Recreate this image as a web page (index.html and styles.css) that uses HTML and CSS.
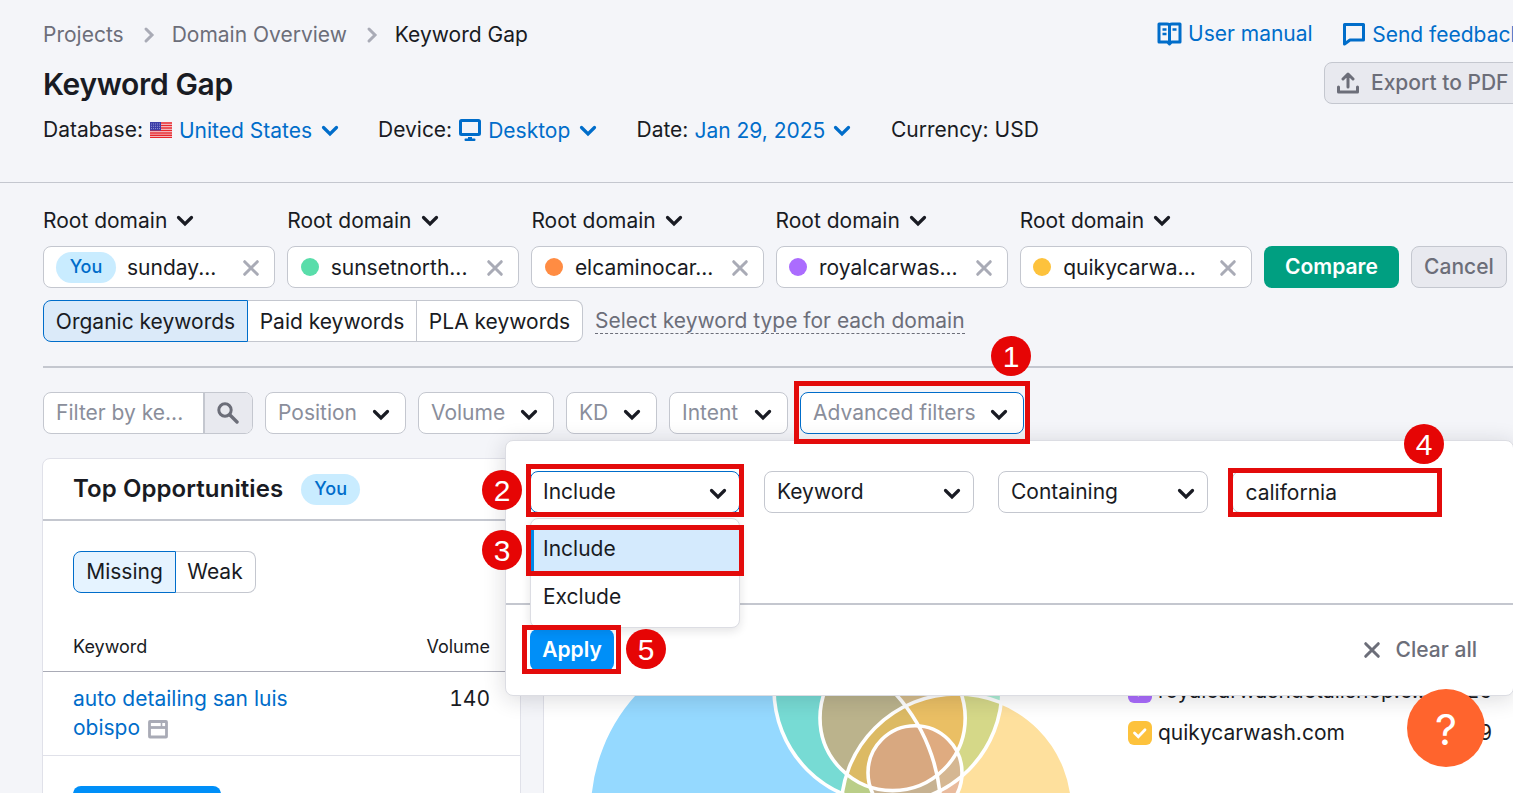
FILE: index.html
```html
<!DOCTYPE html>
<html lang="en">
<head>
<meta charset="utf-8">
<title>Keyword Gap</title>
<link rel="stylesheet" href="styles.css">
</head>
<body>
<svg class="defs" width="0" height="0" aria-hidden="true">
  <symbol id="chev" viewBox="0 0 18 12"><path d="M2.500 2.500 9 9l6.500-6.500" fill="none" stroke="currentColor" stroke-width="3.200" stroke-linecap="round" stroke-linejoin="miter"/></symbol>
  <symbol id="cross" viewBox="0 0 18 18"><path d="M2.700 2.700l12.600 12.600M15.300 2.700l-12.600 12.600" fill="none" stroke="currentColor" stroke-width="3" stroke-linecap="round"/></symbol>
  <symbol id="right" viewBox="0 0 12 18"><path d="M3 3l6 6-6 6" fill="none" stroke="currentColor" stroke-width="3" stroke-linecap="round" stroke-linejoin="miter"/></symbol>
  <symbol id="tick" viewBox="0 0 24 24"><path d="M6.500 12l3.800 3.800 6.700-7" fill="none" stroke="#fff" stroke-width="2.800" stroke-linecap="round" stroke-linejoin="miter"/></symbol>
</svg>
<div class="page">
  <header class="header">
    <div class="head-left">
      <nav class="crumbs">
        <span>Projects</span><svg class="ic-right"><use href="#right"/></svg><span>Domain Overview</span><svg class="ic-right"><use href="#right"/></svg><span class="current">Keyword Gap</span>
      </nav>
      <h1 class="title">Keyword Gap</h1>
      <div class="meta">
        <div class="meta-item m-db"><span>Database:</span>
          <svg class="flag" viewBox="0 0 22 16"><rect width="22" height="16" fill="#f4e4e8"/><path d="M0 1h22M0 3.500h22M0 6h22M0 8.500h22M0 11h22M0 13.300h22M0 15.500h22" stroke="#e8262c" stroke-width="1.400"/><rect width="11" height="8.500" fill="#3c3fa8"/><path d="M1 2h9M1 4.300h9M1 6.600h9" stroke="#a9abdd" stroke-width=".8" stroke-dasharray="1 1"/></svg>
          <span class="link">United States</span><svg class="ic-chev link"><use href="#chev"/></svg></div>
        <div class="meta-item m-dev"><span>Device:</span>
          <svg class="desktop" viewBox="0 0 22 24"><rect x="1.500" y="2.500" width="19" height="14" rx="1" fill="none" stroke="currentColor" stroke-width="3"/><path d="M9 19h4v1.500h2.500q1 0 1 1.200t-1 1.300h-9q-1 0-1-1.300t1-1.200H9z" fill="currentColor"/></svg>
          <span class="link">Desktop</span><svg class="ic-chev link"><use href="#chev"/></svg></div>
        <div class="meta-item m-date"><span>Date:</span><span class="link">Jan 29, 2025</span><svg class="ic-chev link"><use href="#chev"/></svg></div>
        <div class="meta-item m-cur"><span>Currency: USD</span></div>
      </div>
    </div>
    <div class="head-right">
      <div class="help-links">
        <a class="link manual"><svg viewBox="0 0 25 24" width="25" height="24"><path d="M2 2h8q2.500 0 2.500 1.500Q12.500 2 15 2h8v18h-8.500l-2 2-2-2H2zM12.500 3.500v17" fill="none" stroke="currentColor" stroke-width="3" stroke-linejoin="round"/><path d="M5.500 7.500h4M5.500 12h4M15.500 7.500h4" stroke="currentColor" stroke-width="2.500"/></svg><span>User manual</span></a>
        <a class="link feedback"><svg viewBox="0 0 22 23" width="22" height="23"><path d="M1.500 1.500h19v15.500H7L1.500 21z" fill="none" stroke="currentColor" stroke-width="3" stroke-linejoin="round"/></svg><span>Send feedback</span></a>
      </div>
      <button class="export"><svg viewBox="0 0 22 22" width="22" height="22"><path d="M1.500 15v5h19v-5M11 15V3M6 7l5-5 5 5" fill="none" stroke="currentColor" stroke-width="3" stroke-linecap="round" stroke-linejoin="round"/></svg><span>Export to PDF</span></button>
    </div>
  </header>

  <section class="domains">
    <div class="domain"><div class="root">Root domain<svg class="ic-chev"><use href="#chev"/></svg></div><div class="field"><span class="you">You</span><span class="name">sunday...</span><svg class="ic-x"><use href="#cross"/></svg></div></div>
    <div class="domain"><div class="root">Root domain<svg class="ic-chev"><use href="#chev"/></svg></div><div class="field"><i class="dot green"></i><span class="name">sunsetnorth...</span><svg class="ic-x"><use href="#cross"/></svg></div></div>
    <div class="domain"><div class="root">Root domain<svg class="ic-chev"><use href="#chev"/></svg></div><div class="field"><i class="dot orange"></i><span class="name">elcaminocar...</span><svg class="ic-x"><use href="#cross"/></svg></div></div>
    <div class="domain"><div class="root">Root domain<svg class="ic-chev"><use href="#chev"/></svg></div><div class="field"><i class="dot purple"></i><span class="name">royalcarwas...</span><svg class="ic-x"><use href="#cross"/></svg></div></div>
    <div class="domain"><div class="root">Root domain<svg class="ic-chev"><use href="#chev"/></svg></div><div class="field"><i class="dot yellow"></i><span class="name">quikycarwa...</span><svg class="ic-x"><use href="#cross"/></svg></div></div>
    <button class="compare">Compare</button>
    <button class="cancel">Cancel</button>
  </section>

  <section class="types">
    <div class="seg"><span class="seg-item on w-org">Organic keywords</span><span class="seg-item w-paid">Paid keywords</span><span class="seg-item w-pla">PLA keywords</span></div>
    <span class="hint">Select keyword type for each domain</span>
  </section>

  <section class="filters">
    <div class="search"><span>Filter by ke...</span><div class="search-btn"><svg viewBox="0 0 22 22" width="22" height="22"><circle cx="8" cy="8" r="6.200" fill="none" stroke="currentColor" stroke-width="3"/><path d="M13 13l7 7" stroke="currentColor" stroke-width="3.400" stroke-linecap="round"/></svg></div></div>
    <div class="filter f-pos"><span>Position</span><svg class="ic-chev"><use href="#chev"/></svg></div>
    <div class="filter f-vol"><span>Volume</span><svg class="ic-chev"><use href="#chev"/></svg></div>
    <div class="filter f-kd"><span>KD</span><svg class="ic-chev"><use href="#chev"/></svg></div>
    <div class="filter f-int"><span>Intent</span><svg class="ic-chev"><use href="#chev"/></svg></div>
    <div class="filter f-adv"><span>Advanced filters</span><svg class="ic-chev"><use href="#chev"/></svg></div>
  </section>

  <main class="cards">
    <section class="card opportunities">
      <div class="card-head"><h2>Top Opportunities</h2><span class="you">You</span></div>
      <div class="card-body"><div class="seg"><span class="seg-item on w-miss">Missing</span><span class="seg-item w-weak">Weak</span></div></div>
      <div class="thead"><span>Keyword</span><span>Volume</span></div>
      <div class="row"><div class="kw link">auto detailing san luis<br>obispo <svg viewBox="0 0 20 19" width="20" height="19"><rect x="1.500" y="1.500" width="17" height="15.500" rx=".5" fill="none" stroke="currentColor" stroke-width="2.800"/><path d="M1 7.500h18" stroke="currentColor" stroke-width="2.800"/><path d="M13.500 2v5" stroke="currentColor" stroke-width="1.600"/></svg></div><span class="vol">140</span></div>
      <div class="cta"></div>
    </section>
    <section class="card overlap">
      <svg class="venn" viewBox="544 640 540 153" width="540" height="153">
        <g fill-opacity=".5">
          <circle cx="765.500" cy="812" r="176" fill="#2bb3ff"/>
          <circle cx="888" cy="689.300" r="114" fill="#59ddaa"/>
          <circle cx="892.600" cy="718" r="72.600" fill="#ff8c43"/>
          <circle cx="915" cy="772.700" r="47" fill="#ab6cfe"/>
          <circle cx="957" cy="810" r="116" fill="#fdc23c"/>
        </g>
        <g fill="none" stroke="#fff" stroke-width="3.600">
          <circle cx="765" cy="812" r="176"/>
          <circle cx="888" cy="689.300" r="114"/>
          <circle cx="892.600" cy="718" r="72.600"/>
          <circle cx="915" cy="772.700" r="47"/>
          <circle cx="957" cy="810" r="116"/>
        </g>
      </svg>
      <div class="legend">
        <div class="leg"><span class="box purple"><svg width="24" height="24"><use href="#tick"/></svg></span><span>royalcarwashdetailshop.c...</span><b>26</b></div>
        <div class="leg"><span class="box yellow"><svg width="24" height="24"><use href="#tick"/></svg></span><span>quikycarwash.com</span><b>9</b></div>
      </div>
    </section>
  </main>

  <div class="panel">
    <div class="conditions">
      <div class="select focus"><span>Include</span><svg class="ic-chev"><use href="#chev"/></svg></div>
      <div class="select"><span>Keyword</span><svg class="ic-chev"><use href="#chev"/></svg></div>
      <div class="select"><span>Containing</span><svg class="ic-chev"><use href="#chev"/></svg></div>
      <div class="select input"><span>california</span></div>
    </div>
    <div class="actions"><button class="apply">Apply</button><div class="clear"><svg class="ic-x"><use href="#cross"/></svg><span>Clear all</span></div></div>
  </div>
  <div class="menu"><div class="opt sel">Include</div><div class="opt">Exclude</div></div>

  <div class="mark mark1"></div><div class="mark mark2"></div><div class="mark mark3"></div><div class="mark mark4"></div><div class="mark mark5"></div>
  <div class="num num1">1</div><div class="num num2">2</div><div class="num num3">3</div><div class="num num4">4</div><div class="num num5">5</div>
  <div class="help">?</div>
</div>
</body>
</html>
```
FILE: styles.css
```css
* { box-sizing: border-box; }
body { margin: 0; background: #f4f5f9; color: #191b23; font: 21px/30px Inter, "Liberation Sans", sans-serif; }
button { font: inherit; }
.defs { position: absolute; }
.page { position: relative; width: 1513px; height: 793px; overflow: hidden; white-space: nowrap; }
.link { color: #006dca; }
.ic-chev { width: 18px; height: 12px; flex: none; }
.ic-x { width: 18px; height: 18px; flex: none; color: #a9abb6; }
.ic-right { width: 12px; height: 18px; flex: none; margin: 0 -1px 0 1px; color: #a9abb6; }

.header { display: flex; height: 183px; padding: 20px 0 0 43px; border-bottom: 1px solid #c4c7cf; }
.head-left { width: 1114px; flex: none; }
.crumbs { display: flex; align-items: center; height: 30px; gap: 18px; color: #6c6e79; }
.crumbs .current { color: #191b23; }
.title { margin: 14px 0 0; font-size: 30px; line-height: 40px; font-weight: 600; letter-spacing: -.35px; }
.meta { display: flex; margin-top: 11px; }
.meta-item { display: flex; align-items: center; height: 30px; flex: none; gap: 7px; }
.meta-item .link { margin-top: 2px; }
.m-db { width: 335px; }
.m-dev { width: 258.500px; }
.m-date { width: 254.500px; gap: 6px; }
.meta-item .ic-chev { margin-left: 2px; }
.flag { width: 22px; height: 16px; }
.desktop { width: 22px; height: 24px; margin-top: -1px; color: #006dca; }
.head-right { flex: none; }
.help-links { display: flex; height: 28px; align-items: center; gap: 30px; }
.help-links a { display: flex; align-items: center; gap: 6px; }
.help-links .feedback { gap: 7.500px; }
.feedback span { padding-top: 2px; }
.export { display: flex; align-items: center; gap: 12px; width: 210px; height: 42px; margin: 14px 0 0 167px; padding: 0 12px; color: #6c6e79; background: #e8e9ef; border: 1px solid #c4c7cf; border-radius: 8px; font-weight: 500; }

.domains { display: flex; align-items: flex-end; gap: 12px; padding: 22px 0 0 43px; height: 105px; }
.domain { width: 232.200px; flex: none; }
.root { display: flex; align-items: center; gap: 9px; height: 30px; margin-bottom: 10px; }
.field { display: flex; align-items: center; height: 42px; padding: 0 14px 0 12px; background: #fff; border: 1px solid #c4c7cf; border-radius: 8px; }
.name { flex: 1; padding-top: 2px; }
.field .ic-x { margin-top: 1px; }
.you { width: 59px; height: 31px; border-radius: 16px; background: #c9ecff; color: #006dca; font-size: 18px; line-height: 30px; text-align: center; font-weight: 500; }
.field .you { width: 60px; margin-right: 11px; }
.dot { width: 18px; height: 18px; border-radius: 9px; margin: 0 12px 0 .5px; }
.green { background: #59ddaa; }
.orange { background: #ff8c43; }
.purple { background: #ab6cfe; }
.yellow { background: #fdc23c; }
.compare, .cancel { height: 42px; flex: none; padding: 0; border-radius: 8px; font-weight: 500; }
.compare { width: 135px; color: #fff; background: #009f81; border: 0; font-weight: 600; }
.cancel { width: 96px; color: #6c6e79; background: #e8e9ef; border: 1px solid #c4c7cf; }

.types { display: flex; align-items: center; gap: 12px; margin: 12px 0 0 43px; height: 68px; padding-bottom: 24px; border-bottom: 2px solid #c4c7cf; }
.seg { display: flex; height: 42px; }
.seg-item { display: flex; align-items: center; justify-content: center; background: #fff; border: 1px solid #c4c7cf; border-left: 0; }
.types .seg-item { padding-top: 2px; }
.seg-item:last-child { border-radius: 0 8px 8px 0; }
.seg-item.on { background: #dbeaf9; border: 1px solid #006dca; border-radius: 8px 0 0 8px; }
.w-org { width: 205px; }
.w-paid { width: 169px; }
.w-pla { width: 166px; }
.hint { color: #6c6e79; line-height: 26px; height: 26px; border-bottom: 1px dashed #6c6e79; }

.filters { display: flex; gap: 12px; margin: 24px 0 0 43px; height: 42px; }
.filter, .search, .select { display: flex; align-items: center; justify-content: space-between; flex: none; height: 42px; padding: 0 15px 0 12px; background: #fff; border: 1px solid #c4c7cf; border-radius: 8px; }
.filter span, .search span { color: #8a8e9b; }
.filter .ic-chev, .select .ic-chev { margin-top: 3px; }
.search { width: 210px; padding-right: 0; overflow: hidden; }
.search-btn { display: flex; align-items: center; justify-content: center; width: 49px; height: 40px; padding-right: 2px; background: #e8e9ef; border-left: 2px solid #c4c7cf; color: #6c6e79; }
.f-pos { width: 141px; }
.f-vol { width: 136px; }
.f-kd { width: 91px; }
.f-int { width: 119px; }
.f-adv { width: 224px; border-color: #006dca; }

.cards { display: flex; gap: 22px; margin: 24px 0 0 42px; }
.card { height: 400px; flex: none; background: #fff; border: 1px solid #e0e1e9; border-radius: 8px; }
.opportunities { width: 479px; }
.overlap { display: flex; width: 1020px; padding-top: 181px; border-radius: 8px; }
.card-head { display: flex; align-items: center; gap: 18px; height: 62px; padding: 0 0 1px 30px; border-bottom: 2px solid #c4c7cf; }
.card-head h2 { margin: 0; font-size: 24px; font-weight: 600; letter-spacing: .08px; }
.card-head .you { margin-top: 1px; }
.card-body { padding: 30px 30px 0; height: 101px; }
.card-body .on { background: #e5f3ff; }
.w-miss { width: 103px; }
.w-weak { width: 80px; padding-right: 1px; }
.thead { display: flex; justify-content: space-between; align-items: center; height: 50px; padding: 0 30px; font-size: 18px; border-bottom: 1px solid #a9abb6; }
.row { display: flex; justify-content: space-between; height: 84px; padding: 12px 30px 0; border-bottom: 1px solid #e0e1e9; line-height: 29px; }
.kw svg { color: #a9abb6; vertical-align: -4px; margin-left: 2px; }
.vol { font-variant-numeric: tabular-nums; }
.cta { width: 148px; height: 42px; margin: 30px 0 0 30px; border-radius: 8px; background: #008ff8; }
.venn { flex: none; }
.legend { width: 364px; margin: 30px 0 0 44px; }
.leg { display: flex; align-items: center; height: 42px; gap: 6px; }
.leg b { margin-left: auto; font-weight: 400; }
.box { width: 24px; height: 24px; border-radius: 6px; }
.box svg { display: block; }

.panel { position: absolute; left: 505px; top: 440px; width: 1009px; height: 256px; background: #fff; border: 1px solid #dcdde3; border-radius: 8px; box-shadow: 0 3px 22px rgba(25, 27, 35, .16); }
.conditions { display: flex; gap: 24px; height: 164px; padding: 30px 24px 0; border-bottom: 2px solid #c4c7cf; }
.select { width: 210px; padding-right: 12px; }
.focus { border-color: #006dca; }
.input { padding: 2px 0 0 12.500px; }
.actions { display: flex; justify-content: space-between; padding: 24px 36px 0 24px; }
.apply { width: 84px; height: 42px; padding: 0; border: 0; border-radius: 8px; background: #008ff8; color: #fff; font-weight: 600; }
.clear { display: flex; align-items: center; gap: 15px; color: #6c6e79; font-weight: 500; }
.clear .ic-x { color: #6c6e79; }
.menu { position: absolute; left: 530px; top: 518px; width: 210px; height: 110px; padding-top: 6px; background: #fff; border: 1px solid #dcdde3; border-radius: 8px; box-shadow: 0 3px 10px rgba(25, 27, 35, .12); }
.opt { height: 48px; line-height: 48px; padding-left: 12px; }
.sel { background: #d4eafd; box-shadow: inset 3px 0 #0086e8; }

.mark { position: absolute; border: 5px solid #e30b0b; }
.mark1 { left: 794px; top: 381px; width: 236px; height: 63px; }
.mark2 { left: 526px; top: 464px; width: 218px; height: 53px; }
.mark3 { left: 526px; top: 525px; width: 218px; height: 51px; }
.mark4 { left: 1228px; top: 468px; width: 214px; height: 49px; }
.mark5 { left: 522px; top: 625px; width: 99px; height: 49px; }
.num { position: absolute; width: 40px; height: 40px; border-radius: 20px; background: #e60505; color: #fff; font: 30px/42px "Liberation Sans", Arial, sans-serif; text-align: center; }
.num1 { left: 991px; top: 336px; }
.num2 { left: 482px; top: 470px; }
.num3 { left: 482px; top: 530px; }
.num4 { left: 1404px; top: 424px; }
.num5 { left: 626px; top: 629px; }
.help { position: absolute; left: 1407px; top: 689px; width: 78px; height: 78px; border-radius: 39px; background: #ff642d; color: #fff; font-size: 43px; line-height: 80px; text-align: center; font-weight: 400; }
```
